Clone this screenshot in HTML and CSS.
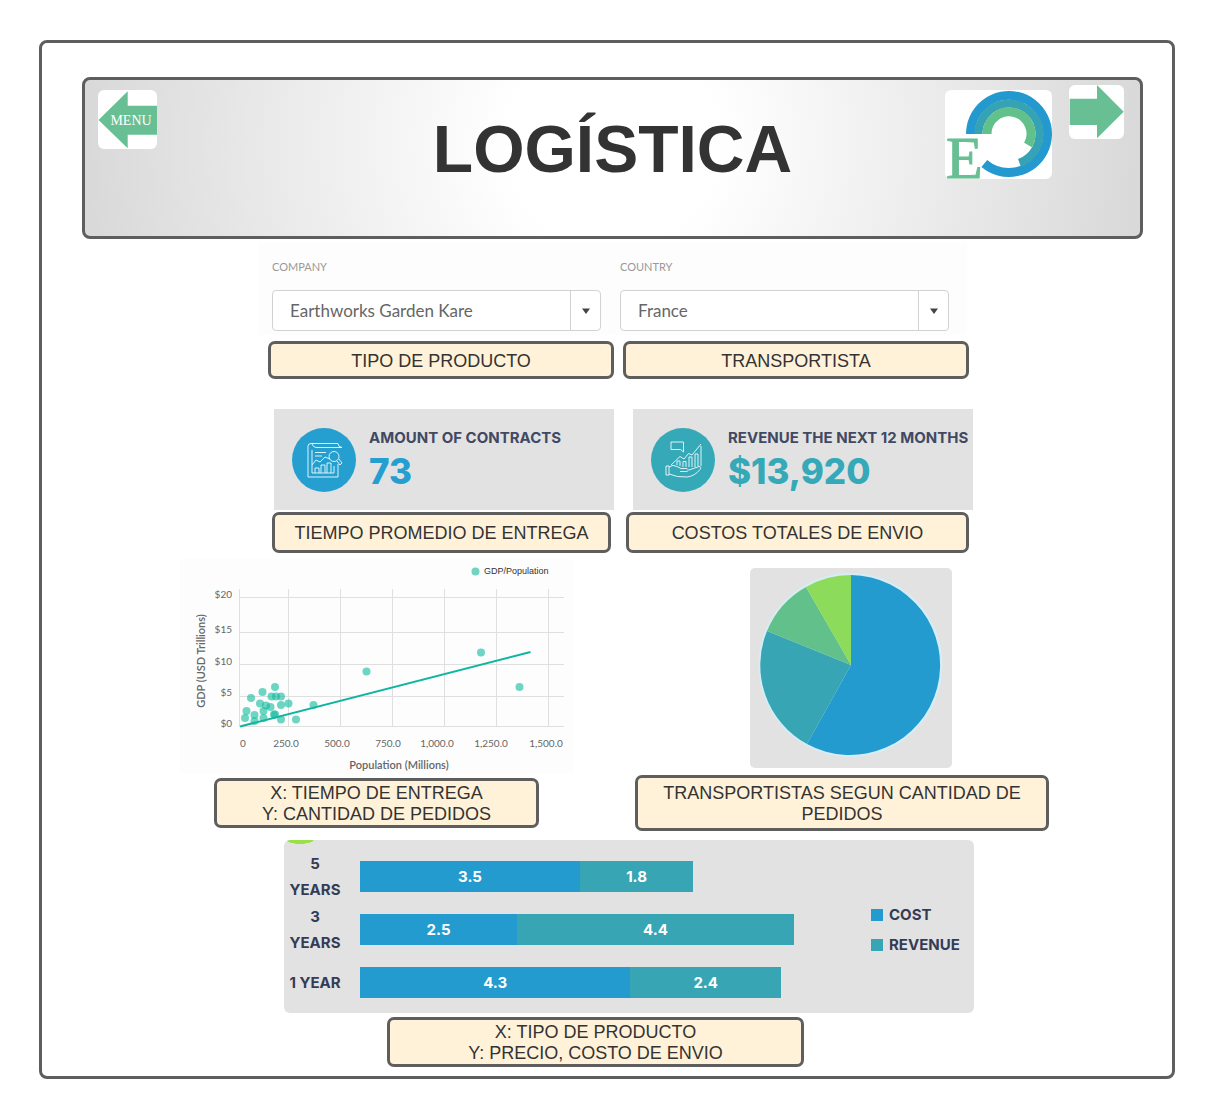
FILE: index.html
```html
<!DOCTYPE html>
<html lang="es">
<head>
<meta charset="utf-8">
<meta name="viewport" content="width=device-width, initial-scale=1">
<title>Logística</title>
<link rel="stylesheet" href="styles.css">
</head>
<body>
<div class="frame">
  <header class="banner">
    <a class="tile tile-menu" href="#menu">
      <svg width="59" height="59" viewBox="0 0 59 59">
        <path class="arrow" d="M0.5 30 29.7 1.3V15.7H59V44.7H29.7V58.3Z"/>
        <text class="arrow-text" x="33" y="35" text-anchor="middle">MENU</text>
      </svg>
    </a>
    <h1 class="title">LOGÍSTICA</h1>
    <div class="banner-end">
      <svg class="tile tile-logo" width="107" height="89" viewBox="0 0 107 89" role="img" aria-label="Logo">
        <g fill="none">
          <path stroke="#2399cf" stroke-width="9" d="M25.5 44A38.5 38.5 0 1 1 39.3 73.5"/>
          <path stroke="#36a3b5" stroke-width="8" d="M33.5 44A30.5 30.5 0 1 1 74.4 72.7"/>
          <path stroke="#62c08a" stroke-width="9" d="M42 44A22 22 0 1 1 83 55"/>
        </g>
        <text class="logo-letter" x="1" y="88">E</text>
      </svg>
      <a class="tile tile-next" href="#next" aria-label="Siguiente">
        <svg width="55" height="54" viewBox="0 0 55 54">
          <path class="arrow" d="M0.7 13.7H28V0L54.7 26.7 28 53.3V40H0.7Z"/>
        </svg>
      </a>
    </div>
  </header>

  <div class="row row-filters">
    <form class="filters">
      <label class="filter">
        <span class="filter-label">COMPANY</span>
        <span class="picker">
          <select><option>Earthworks Garden Kare</option></select>
          <span class="picker-arrow"><svg width="8" height="6" viewBox="0 0 8 6"><path d="M0 0.5H8L4 6Z"/></svg></span>
        </span>
      </label>
      <label class="filter">
        <span class="filter-label">COUNTRY</span>
        <span class="picker">
          <select><option>France</option></select>
          <span class="picker-arrow"><svg width="8" height="6" viewBox="0 0 8 6"><path d="M0 0.5H8L4 6Z"/></svg></span>
        </span>
      </label>
    </form>
  </div>
  <div class="row row-filter-captions">
    <p class="caption first">TIPO DE PRODUCTO</p>
    <p class="caption second">TRANSPORTISTA</p>
  </div>

  <div class="row row-cards">
    <section class="card first">
      <svg class="card-icon" width="64" height="64" viewBox="0 0 64 64">
        <circle cx="32" cy="32" r="32" fill="#249fd0"/>
        <g class="icon-lines">
          <path d="M46 36V49H16V18Q16 15.500 19 15.500H46Q46 19 50 19.500H24Q21 19 20 16"/>
          <path d="M42 38V45H20V22M23 24.500H34M23 28H30"/>
          <path d="M20 37 24 32 28 34 33 29 38 31"/>
          <path d="M23 45V40H27V45M29 45V37H33V45M35 45V35H39V45"/>
          <circle cx="42" cy="28.500" r="5"/>
          <path d="M45 33 48 37 50 35 47 31"/>
        </g>
      </svg>
      <div class="card-text">
        <h2>AMOUNT OF CONTRACTS</h2>
        <p class="figure-blue">73</p>
      </div>
    </section>
    <section class="card second">
      <svg class="card-icon" width="64" height="64" viewBox="0 0 64 64">
        <circle cx="32" cy="32" r="32" fill="#36a9b8"/>
        <g class="icon-lines">
          <path d="M20 14H32.500V24L29.500 21.500H20Z"/>
          <path d="M20 37 29 28.500 33 31 37.500 25.500 41 27 50 16"/>
          <path d="M26 37V33H29V38M32 39V33.500H35V39M38 39V29H41V39M44 39V26H47V38M50 38V18"/>
          <path d="M15 38H18V47H15ZM18 39Q22 36 26 38.500L30 40.500H36Q39 43 35 43.500H29M38 42 48 38.500Q51 38.500 49 41.500 44 48 36 49 26 49.500 18 46"/>
        </g>
      </svg>
      <div class="card-text">
        <h2>REVENUE THE NEXT 12 MONTHS</h2>
        <p class="figure-teal">$13,920</p>
      </div>
    </section>
  </div>
  <div class="row row-card-captions">
    <p class="caption first">TIEMPO PROMEDIO DE ENTREGA</p>
    <p class="caption second">COSTOS TOTALES DE ENVIO</p>
  </div>

  <div class="row row-charts">
    <svg class="scatter first" viewBox="0 0 393 215" role="img" aria-label="GDP/Population">
      <path class="grid-lines" d="M59.500 30V168M108.500 30V168M160.500 30V168M212.500 30V168M264.500 30V168M316.500 30V168M368.500 30V168M59 38.500H384M59 73.500H384M59 105.500H384M59 137.500H384M59 167.500H384"/>
      <g class="tick" text-anchor="end">
        <text x="52" y="39">$20</text>
        <text x="52" y="74">$15</text>
        <text x="52" y="106">$10</text>
        <text x="52" y="137">$5</text>
        <text x="52" y="168">$0</text>
      </g>
      <g class="tick" text-anchor="middle">
        <text x="63" y="188">0</text>
        <text x="106" y="188">250.0</text>
        <text x="157" y="188">500.0</text>
        <text x="208" y="188">750.0</text>
        <text x="257" y="188">1,000.0</text>
        <text x="311" y="188">1,250.0</text>
        <text x="366" y="188">1,500.0</text>
      </g>
      <text class="axis" x="219" y="210" text-anchor="middle">Population (Millions)</text>
      <text class="axis" transform="translate(25 102) rotate(-90)" text-anchor="middle">GDP (USD Trillions)</text>
      <g class="dots">
        <circle cx="295.500" cy="12.500" r="4"/>
        <circle cx="65" cy="159" r="4"/><circle cx="66.500" cy="152" r="4"/><circle cx="71" cy="139" r="4"/>
        <circle cx="74.500" cy="156" r="4"/><circle cx="74.500" cy="162" r="4"/><circle cx="82.500" cy="133" r="4"/>
        <circle cx="80" cy="144.500" r="4"/><circle cx="86" cy="146.500" r="4"/><circle cx="83.500" cy="152" r="4"/>
        <circle cx="83.500" cy="159" r="4"/><circle cx="90.500" cy="148" r="4"/><circle cx="95" cy="128" r="4"/>
        <circle cx="91.500" cy="137.500" r="4"/><circle cx="96" cy="137.500" r="4"/><circle cx="101" cy="137.500" r="4"/>
        <circle cx="94" cy="155.500" r="4"/><circle cx="95" cy="155.500" r="4"/><circle cx="101" cy="146" r="4"/>
        <circle cx="108.500" cy="144.500" r="4"/><circle cx="101" cy="160.500" r="4"/><circle cx="116" cy="160.500" r="4"/>
        <circle cx="133.500" cy="146" r="4"/><circle cx="186.500" cy="112.500" r="4"/><circle cx="301" cy="93.500" r="4"/>
        <circle cx="339.500" cy="128" r="4"/>
      </g>
      <path class="trend" d="M60 167.500 350.500 93"/>
      <text class="key" x="304" y="15">GDP/Population</text>
    </svg>
    <svg class="pie second" viewBox="0 0 202 200" role="img" aria-label="Transportistas">
      <circle cx="100.500" cy="97" r="92" fill="#d5edf6"/>
      <path fill="#249bce" d="M101 97V7A90 90 0 1 1 57 176Z"/>
      <path fill="#38a5b5" d="M101 97 57 176A90 90 0 0 1 17 63Z"/>
      <path fill="#62c08a" d="M101 97 17 63A90 90 0 0 1 56 19Z"/>
      <path fill="#8ddb5a" d="M101 97 56 19A90 90 0 0 1 101 7Z"/>
    </svg>
  </div>
  <div class="row row-chart-captions">
    <p class="caption first">X: TIEMPO DE ENTREGA<br>Y: CANTIDAD DE PEDIDOS</p>
    <p class="caption caption-tall second">TRANSPORTISTAS SEGUN CANTIDAD DE PEDIDOS</p>
  </div>

  <div class="row row-bars">
    <div class="bars">
      <div class="bar-list">
        <div class="bar-row"><span class="bar-label">5<br>YEARS</span><div class="track"><span class="bar cost" style="--value:3.5">3.5</span><span class="bar revenue" style="--value:1.8">1.8</span></div></div>
        <div class="bar-row"><span class="bar-label">3<br>YEARS</span><div class="track"><span class="bar cost" style="--value:2.5">2.5</span><span class="bar revenue" style="--value:4.4">4.4</span></div></div>
        <div class="bar-row"><span class="bar-label">1 YEAR</span><div class="track"><span class="bar cost" style="--value:4.3">4.3</span><span class="bar revenue" style="--value:2.4">2.4</span></div></div>
      </div>
      <ul class="legend">
        <li><span class="swatch cost"></span>COST</li>
        <li><span class="swatch revenue"></span>REVENUE</li>
      </ul>
    </div>
  </div>
  <div class="row row-bars-caption">
    <p class="caption first">X: TIPO DE PRODUCTO<br>Y: PRECIO, COSTO DE ENVIO</p>
  </div>
</div>
</body>
</html>
```

FILE: styles.css
```css
* {
  box-sizing: border-box;
}

body {
  margin: 0;
  padding: 40px 39px 38px;
  background: #fff;
  color: #333;
  font-family: "Liberation Sans", Arial, sans-serif;
}

h1, h2, p, ul {
  margin: 0;
  padding: 0;
}

svg {
  display: block;
}

.frame {
  padding: 34px 29px 9px 40px;
  border: 3px solid #5e5e5e;
  border-radius: 8px;
}

/* Banner */

.banner {
  display: grid;
  grid-template-columns: 1fr auto 1fr;
  align-items: start;
  min-height: 162px;
  padding: 5px 16px 5px 13px;
  border: 3px solid #5e5e5e;
  border-radius: 8px;
  background: radial-gradient(circle farthest-side at 50% 40%, #fff 20%, #d9d9d9 100%);
}

.title {
  padding-left: 3px;
  font-size: 66px;
  line-height: 128px;
  font-weight: bold;
}

.banner-end {
  display: flex;
  align-items: flex-start;
  justify-content: flex-end;
  gap: 17px;
}

.tile {
  border-radius: 6px;
  background: #fff;
  overflow: hidden;
}

.tile-menu {
  justify-self: start;
  margin-top: 5px;
}

.tile-logo {
  margin-top: 5px;
  overflow: visible;
}

.arrow {
  fill: #68bf94;
}

.arrow-text {
  fill: #fff;
  font: 14px "Liberation Serif", "Times New Roman", serif;
}

.logo-letter {
  fill: #68bf94;
  stroke: #68bf94;
  stroke-width: 1px;
  font: 60px "Liberation Serif", "Times New Roman", serif;
}

/* Rows: outer tracks are the side space, items sit in the tracks between */

.row {
  display: grid;
}

.first {
  grid-column: 2;
}

.second {
  grid-column: 4;
}

.row-filters {
  grid-template-columns: 177fr minmax(0, 708fr) 176fr;
  margin-top: 4px;
}

.row-filter-captions {
  grid-template-columns: 186fr minmax(0, 346fr) 9fr minmax(0, 346fr) 174fr;
  margin-top: 6px;
}

.row-cards {
  grid-template-columns: 192fr minmax(0, 340fr) 19fr minmax(0, 340fr) 170fr;
  margin-top: 30px;
}

.row-card-captions {
  grid-template-columns: 190fr minmax(0, 339fr) 15fr minmax(0, 343fr) 174fr;
  margin-top: 2px;
}

.row-charts {
  grid-template-columns: 98fr minmax(0, 393fr) 177fr minmax(0, 202fr) 191fr;
  align-items: start;
  margin-top: 6px;
}

.row-chart-captions {
  grid-template-columns: 132fr minmax(0, 325fr) 96fr minmax(0, 414fr) 94fr;
  align-items: center;
  margin-top: 1px;
}

.row-bars {
  grid-template-columns: 202fr minmax(0, 690fr) 169fr;
  margin-top: 9px;
}

.row-bars-caption {
  grid-template-columns: 305fr minmax(0, 417fr) 339fr;
  margin-top: 4px;
}

.caption {
  display: flex;
  align-items: center;
  justify-content: center;
  min-height: 38px;
  padding: 2px 16px 0;
  border: 3px solid #5e5e5e;
  border-radius: 7px;
  background: #fff2d9;
  font-size: 18px;
  line-height: 21px;
  text-align: center;
}

.row-card-captions .caption {
  min-height: 41px;
}

.caption-tall {
  min-height: 56px;
}

/* Filters */

.filters {
  grid-column: 2;
  display: grid;
  grid-template-columns: 1fr 1fr;
  gap: 19px;
  padding: 16px 18px 4px 13px;
  background: #fdfdfd;
}

.filter {
  display: grid;
  gap: 15px;
}

.filter-label {
  color: #999;
  font: 11px/16px Lato, sans-serif;
}

.picker {
  display: grid;
  grid-template-columns: 1fr 31px;
}

.picker select {
  grid-area: 1 / 1 / 2 / 3;
  width: 100%;
  height: 41px;
  padding: 0 40px 0 17px;
  border: 1px solid #d2d2d2;
  border-radius: 4px;
  background: #fff;
  color: #666;
  font: 17px Lato, sans-serif;
  appearance: none;
}

.picker-arrow {
  grid-area: 1 / 2;
  display: grid;
  place-content: center;
  border-left: 1px solid #d2d2d2;
  fill: #444;
  pointer-events: none;
  z-index: 1;
}

/* Key figures */

.card {
  display: flex;
  gap: 13px;
  min-height: 101px;
  padding: 19px 0 0 18px;
  background: #e2e2e2;
}

.card-icon {
  flex: none;
}

.icon-lines {
  fill: none;
  stroke: #dcf3f9;
  stroke-width: 1px;
  stroke-linejoin: round;
}

.card-text {
  padding-top: 1px;
  font-family: Inter, sans-serif;
  white-space: nowrap;
}

.card h2 {
  color: #414962;
  font-size: 15px;
  line-height: 18px;
  font-weight: 700;
}

.card p {
  font-size: 35px;
  line-height: 48px;
  font-weight: 800;
}

.figure-blue {
  color: #249fd0;
}

.figure-teal {
  color: #36a9b8;
}

/* Charts */

.scatter {
  width: 100%;
  background: #fdfdfd;
}

.grid-lines {
  fill: none;
  stroke: #dfdfdf;
}

.tick {
  fill: #666;
  font: 10px Lato, sans-serif;
}

.axis {
  fill: #666;
  font: 600 11px Lato, sans-serif;
}

.key {
  fill: #333;
  font: 9px "Liberation Sans", Arial, sans-serif;
}

.dots {
  fill: #10bb9d;
  fill-opacity: 0.6;
}

.trend {
  stroke: #10b5a0;
  stroke-width: 2px;
}

.pie {
  width: 100%;
  margin-top: 9px;
  border-radius: 5px;
  background: #e2e2e2;
}

.bars {
  grid-column: 2;
  display: grid;
  grid-template-columns: 1fr 103px;
  padding: 10px 0 4px;
  border-radius: 6px;
  background: radial-gradient(ellipse 14px 4px at 16px 0, #9be04a 90%, transparent 100%) #e2e2e2;
  color: #343c55;
  font: 700 15px/26px Inter, sans-serif;
}

.bar-row {
  display: grid;
  grid-template-columns: 62px 1fr;
  gap: 14px;
  align-items: center;
  min-height: 53px;
}

.bar-label {
  text-align: center;
  white-space: nowrap;
}

.track {
  display: flex;
}

.bar {
  width: calc(var(--value) * 100% / 8.13);
  color: #fff;
  line-height: 31px;
  text-align: center;
}

.cost {
  background: #249bce;
}

.revenue {
  background: #38a5b5;
}

.legend {
  align-self: center;
  display: grid;
  gap: 4px;
  list-style: none;
}

.legend li {
  display: flex;
  align-items: center;
  gap: 6px;
}

.swatch {
  width: 12px;
  height: 12px;
}
```
